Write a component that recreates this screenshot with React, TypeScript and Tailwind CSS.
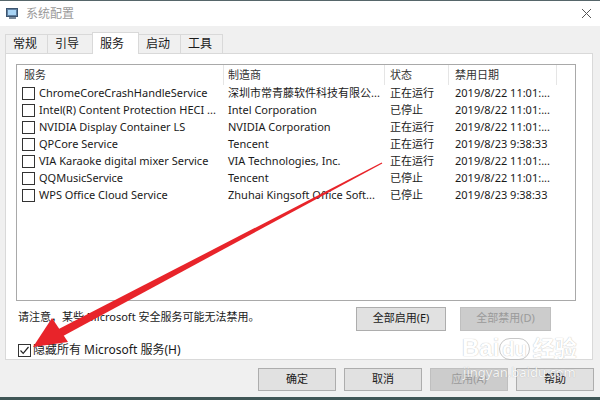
import React from "react";

const rows: [string, string, string, string][] = [
  ["ChromeCoreCrashHandleService", "深圳市常青藤软件科技有限公...", "正在运行", "2019/8/22 11:01:..."],
  ["Intel(R) Content Protection HECI ...", "Intel Corporation", "已停止", "2019/8/22 11:01:..."],
  ["NVIDIA Display Container LS", "NVIDIA Corporation", "正在运行", "2019/8/22 11:01:..."],
  ["QPCore Service", "Tencent", "正在运行", "2019/8/23 9:38:33"],
  ["VIA Karaoke digital mixer Service", "VIA Technologies, Inc.", "正在运行", "2019/8/22 11:01:..."],
  ["QQMusicService", "Tencent", "已停止", "2019/8/22 11:01:..."],
  ["WPS Office Cloud Service", "Zhuhai Kingsoft Office Soft...", "已停止", "2019/8/23 9:38:33"],
];

const font = { fontFamily: '"Noto Sans", "Noto Sans CJK SC", sans-serif' };

function Box({ checked = false }: { checked?: boolean }) {
  return (
    <span className="flex h-[13px] w-[13px] shrink-0 items-center justify-center border border-[#333] bg-white">
      {checked && (
        <svg width="11" height="11" viewBox="0 0 11 11">
          <path d="M1.5 5.5 L4.2 8.3 L9.5 2" fill="none" stroke="#222" strokeWidth="1.2" />
        </svg>
      )}
    </span>
  );
}

function Tab({ label, active = false, w }: { label: string; active?: boolean; w: string }) {
  return active ? (
    <div className={`${w} -mb-px z-10 flex h-[22px] items-center border border-b-0 border-[#d9d9d9] bg-white pl-[7px]`}>
      {label}
    </div>
  ) : (
    <div className={`${w} -ml-px first:ml-0 flex h-[19px] items-center border border-b-0 border-[#d9d9d9] bg-[#f0f0f0] pl-[7px]`}>
      {label}
    </div>
  );
}

export default function App() {
  return (
    <div className="relative flex h-[400px] w-[600px] flex-col overflow-hidden bg-[#f0f0f0] text-[11px] text-[#1a1a1a]" style={font}>
      <div className="h-px bg-[#56666a]" />
      {/* title bar */}
      <div className="flex h-[25px] items-center bg-white pl-[6px] pr-[8px]">
        <svg width="13" height="11" viewBox="0 0 13 11">
          <rect x="0.5" y="0.5" width="11" height="8" fill="#5f7f9f" stroke="#3c5570" />
          <rect x="2" y="2" width="8" height="5" fill="#a8d4f5" />
          <rect x="3" y="9" width="7" height="2" fill="#7a8a9a" />
        </svg>
        <span className="ml-[7px] text-[12px] text-[#9a9a9a]">系统配置</span>
        <svg className="ml-auto" width="11" height="11" viewBox="0 0 11 11">
          <path d="M1 1 L10 10 M10 1 L1 10" stroke="#555" strokeWidth="1" />
        </svg>
      </div>
      {/* tabs */}
      <div className="ml-[5px] mt-[6px] flex items-end text-[12px]">
        <Tab label="常规" w="w-[43px]" />
        <Tab label="引导" w="w-[46px]" />
        <Tab label="服务" w="w-[47px] -ml-px" active />
        <Tab label="启动" w="w-[43px]" />
        <Tab label="工具" w="w-[43px]" />
      </div>
      {/* panel */}
      <div className="ml-[5px] flex h-[307px] w-[588px] flex-col border border-[#d9d9d9] bg-white pl-[10px] pt-[10px]">
        <div className="h-[237px] w-[560px] border border-[#a9a9a9] bg-white">
          <div className="grid h-[20px] grid-cols-[207px_161px_64px_108px_1fr] items-center text-[#333]">
            <div className="flex h-full items-center border-r border-[#e5e5e5] pl-[7px]">服务</div>
            <div className="flex h-full items-center border-r border-[#e5e5e5] pl-[4px]">制造商</div>
            <div className="flex h-full items-center border-r border-[#e5e5e5] pl-[5px]">状态</div>
            <div className="flex h-full items-center border-r border-[#e5e5e5] pl-[6px]">禁用日期</div>
            <div />
          </div>
          {rows.map((r) => (
            <div key={r[0]} className="grid h-[17px] grid-cols-[207px_161px_64px_108px_1fr] items-center whitespace-nowrap">
              <div className="flex items-center gap-[4px] overflow-hidden pl-[5px]">
                <Box />
                <span>{r[0]}</span>
              </div>
              <div className="overflow-hidden pl-[4px]">{r[1]}</div>
              <div className="pl-[5px]">{r[2]}</div>
              <div className="pl-[6px]">{r[3]}</div>
              <div />
            </div>
          ))}
        </div>
        <div className="mt-[6px] flex w-[560px] items-start">
          <div className="flex flex-col">
            <span className="ml-[2px] mt-[2px]">请注意，某些 Microsoft 安全服务可能无法禁用。</span>
            <div className="ml-[2px] mt-[16px] flex items-center gap-[2px]">
              <Box checked />
              <span className="text-[12px]">隐藏所有 Microsoft 服务(H)</span>
            </div>
          </div>
          <div className="ml-auto mr-[25px] flex gap-[14px]">
            <button className="flex h-[24px] w-[90px] items-center justify-center border border-[#adadad] bg-[#e1e1e1]">全部启用(E)</button>
            <button className="flex h-[24px] w-[91px] items-center justify-center border border-[#bfbfbf] bg-[#cccccc] text-[#9a9a9a]">全部禁用(D)</button>
          </div>
        </div>
      </div>
      {/* bottom buttons */}
      <div className="mt-[8px] flex gap-[8px] pl-[258px]">
        <button className="flex h-[23px] w-[78px] items-center justify-center border border-[#adadad] bg-[#e1e1e1]">确定</button>
        <button className="flex h-[23px] w-[78px] items-center justify-center border border-[#adadad] bg-[#e1e1e1]">取消</button>
        <button className="flex h-[23px] w-[78px] items-center justify-center border border-[#bfbfbf] bg-[#cccccc] text-[#9a9a9a]">应用(A)</button>
        <button className="flex h-[23px] w-[78px] items-center justify-center border border-[#adadad] bg-[#e1e1e1]">帮助</button>
      </div>
      <div className="mt-auto h-[3px] bg-[#3f5656]" />

      {/* red arrow annotation */}
      <svg className="pointer-events-none absolute left-0 top-0" width="600" height="400" viewBox="0 0 600 400">
        <polygon points="382.3,163.4 381.7,162.6 57.8,329.5 62.2,336.5" fill="#e8242a" />
        <polygon points="33,347 52,318 68,342" fill="#e8242a" />
      </svg>

      {/* watermark */}
      <div className="pointer-events-none absolute left-[462px] top-[336px] flex flex-col items-center text-white opacity-80 [text-shadow:0_0_1px_#9a9a9a]">
        <div className="flex items-end text-[24px] font-bold leading-none" style={{ fontFamily: '"Liberation Sans", "Noto Sans CJK SC", sans-serif' }}>
          <span>Bai</span>
          <span className="rounded-full border border-[#bbb] px-[2px] text-[20px]">du</span>
          <span className="ml-[3px] text-[22px]">经验</span>
        </div>
        <div className="mt-[6px] text-[13px] leading-none">jingyan.baidu.com</div>
      </div>
    </div>
  );
}
